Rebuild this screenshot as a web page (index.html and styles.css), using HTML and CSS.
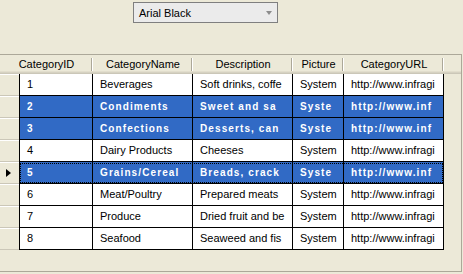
FILE: index.html
```html
<!DOCTYPE html>
<html lang="en">
  <head>
    <meta charset="UTF-8" />
    <title>Categories</title>
    <link rel="stylesheet" href="styles.css">
  </head>
  <body>
    <div class="toolbar">
      <div class="combo">
        <span>Arial Black</span>
        <span class="arrow"></span>
      </div>
    </div>

    <div class="grid">
      <div class="head">
        <div class="hcell">CategoryID</div>
        <div class="hcell">CategoryName</div>
        <div class="hcell">Description</div>
        <div class="hcell">Picture</div>
        <div class="hcell">CategoryURL</div>
      </div>

      <!-- cell texts are cut where the grid cuts them -->
      <div class="row">
        <div class="selector"></div>
        <div class="cells">
          <div class="cell">1</div>
          <div class="cell">Beverages</div>
          <div class="cell">Soft drinks, coffe</div>
          <div class="cell">System</div>
          <div class="cell">http://www.infragi</div>
        </div>
      </div>
      <div class="row selected">
        <div class="selector"></div>
        <div class="cells">
          <div class="cell">2</div>
          <div class="cell">Condiments</div>
          <div class="cell">Sweet and sa</div>
          <div class="cell">Syste</div>
          <div class="cell">http://www.inf</div>
        </div>
      </div>
      <div class="row selected">
        <div class="selector"></div>
        <div class="cells">
          <div class="cell">3</div>
          <div class="cell">Confections</div>
          <div class="cell">Desserts, can</div>
          <div class="cell">Syste</div>
          <div class="cell">http://www.inf</div>
        </div>
      </div>
      <div class="row">
        <div class="selector"></div>
        <div class="cells">
          <div class="cell">4</div>
          <div class="cell">Dairy Products</div>
          <div class="cell">Cheeses</div>
          <div class="cell">System</div>
          <div class="cell">http://www.infragi</div>
        </div>
      </div>
      <div class="row selected current">
        <div class="selector"><span class="pointer"></span></div>
        <div class="cells">
          <div class="cell">5</div>
          <div class="cell">Grains/Cereal</div>
          <div class="cell">Breads, crack</div>
          <div class="cell">Syste</div>
          <div class="cell">http://www.inf</div>
        </div>
      </div>
      <div class="row">
        <div class="selector"></div>
        <div class="cells">
          <div class="cell">6</div>
          <div class="cell">Meat/Poultry</div>
          <div class="cell">Prepared meats</div>
          <div class="cell">System</div>
          <div class="cell">http://www.infragi</div>
        </div>
      </div>
      <div class="row">
        <div class="selector"></div>
        <div class="cells">
          <div class="cell">7</div>
          <div class="cell">Produce</div>
          <div class="cell">Dried fruit and be</div>
          <div class="cell">System</div>
          <div class="cell">http://www.infragi</div>
        </div>
      </div>
      <div class="row">
        <div class="selector"></div>
        <div class="cells">
          <div class="cell">8</div>
          <div class="cell">Seafood</div>
          <div class="cell">Seaweed and fis</div>
          <div class="cell">System</div>
          <div class="cell">http://www.infragi</div>
        </div>
      </div>
    </div>
  </body>
</html>
```

FILE: styles.css
```css
body {
  margin: 0;
  height: 274px;
  overflow: hidden;
  background: #ece9d8;
  color: #000;
  font-family: "Liberation Sans", Arial, sans-serif;
  font-size: 11px;
}

.toolbar {
  height: 54px;
  padding: 2px 0 0 133px;
  box-sizing: border-box;
}

.combo {
  width: 145px;
  height: 21px;
  box-sizing: border-box;
  border: 1px solid #7f7f7f;
  background: #ebebeb;
  display: flex;
  align-items: center;
  justify-content: space-between;
  padding: 0 5px 0 5px;
}

.arrow {
  width: 0;
  height: 0;
  border-left: 3.5px solid transparent;
  border-right: 3.5px solid transparent;
  border-top: 4px solid #8c8c8c;
  margin-top: 1px;
}

.grid {
  width: 462px;
  height: 218px;
  box-sizing: border-box;
  border: 1px solid #aca899;
  border-left: none;
}

.head {
  display: grid;
  grid-template-columns: 93px 100px 100px 51px 100px;
  height: 19px;
  box-shadow: inset 0 -1px #cbc7b8, inset 0 -2px #d6d2c2, inset 0 -3px #e2decd;
}

.hcell {
  text-align: center;
  line-height: 18px;
  white-space: nowrap;
  overflow: hidden;
  background:
    linear-gradient(#aca899, #aca899) no-repeat calc(100% - 1px) 3px / 1px 13px,
    linear-gradient(#fff, #fff) no-repeat 100% 3px / 1px 13px;
}

.row {
  display: flex;
  height: 22px;
}

.selector {
  width: 19px;
  box-sizing: border-box;
  border-bottom: 1px solid #cbc7b8;
  box-shadow: inset 0 1px #fff;
  display: flex;
  align-items: center;
  padding-left: 6px;
}

.pointer {
  width: 0;
  height: 0;
  border-top: 4.5px solid transparent;
  border-bottom: 4.5px solid transparent;
  border-left: 5px solid #000;
}

.cells {
  display: grid;
  grid-template-columns: 73px 100px 100px 51px 100px;
  border-left: 1px solid #000;
  background: #fff;
}

.cell {
  height: 22px;
  box-sizing: border-box;
  border-right: 1px solid #000;
  border-bottom: 1px solid #000;
  padding: 0 1px 0 7px;
  line-height: 21px;
  white-space: nowrap;
  overflow: hidden;
}

.selected .cells {
  background: #316ac5;
  color: #fff;
  font-size: 10px;
  font-weight: bold;
  letter-spacing: 1.1px;
}

.current .cells {
  outline: 1px dotted #000;
  outline-offset: -2px;
}
```
